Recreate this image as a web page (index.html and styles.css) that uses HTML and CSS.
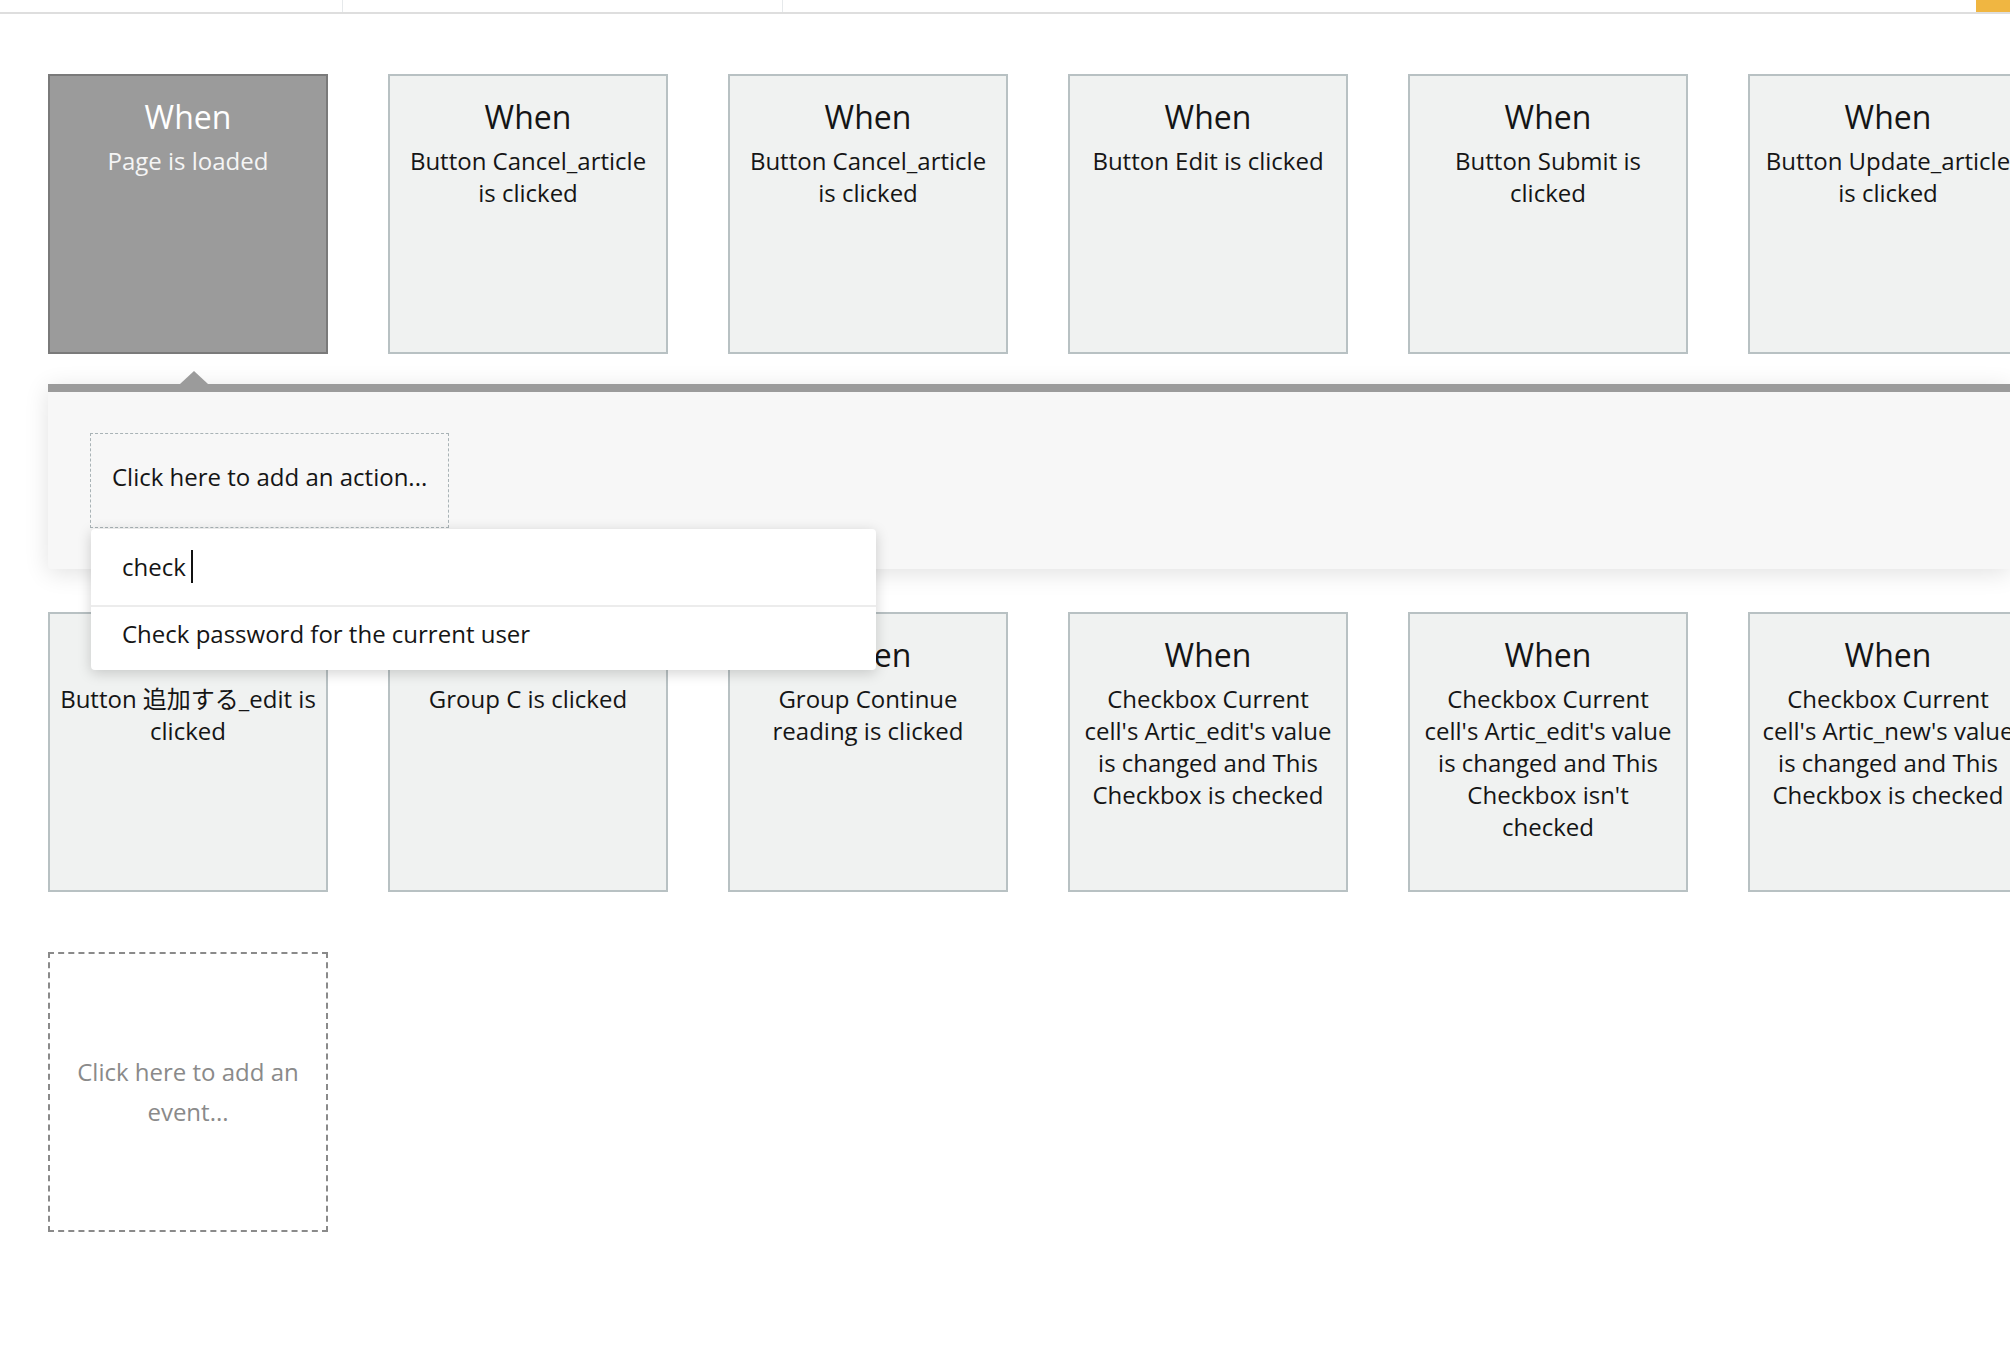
FILE: index.html
```html
<!DOCTYPE html>
<html lang="en">
<head>
<meta charset="utf-8">
<title>Workflow</title>
<link rel="stylesheet" href="styles.css">
</head>
<body>
<header class="topbar">
  <div class="tb-section tb-first"></div>
  <div class="tb-section tb-second"></div>
  <div class="tb-section tb-fill"></div>
  <div class="tb-accent"></div>
</header>
<main class="canvas">
  <div class="row">
    <div class="card card-active"><div class="card-title">When</div><div class="card-sub">Page is loaded</div></div>
    <div class="card"><div class="card-title">When</div><div class="card-sub">Button Cancel_article is clicked</div></div>
    <div class="card"><div class="card-title">When</div><div class="card-sub">Button Cancel_article is clicked</div></div>
    <div class="card"><div class="card-title">When</div><div class="card-sub">Button Edit is clicked</div></div>
    <div class="card"><div class="card-title">When</div><div class="card-sub">Button Submit is clicked</div></div>
    <div class="card"><div class="card-title">When</div><div class="card-sub">Button Update_article is clicked</div></div>
  </div>

  <section class="panel">
    <div class="action-box">
      <span class="action-label">Click here to add an action...</span>
      <div class="dropdown">
        <div class="dd-input"><span>check</span><span class="caret"></span></div>
        <div class="dd-item">Check password for the current user</div>
      </div>
    </div>
  </section>

  <div class="row">
    <div class="card"><div class="card-title">When</div><div class="card-sub">Button 追加する_edit is clicked</div></div>
    <div class="card"><div class="card-title">When</div><div class="card-sub">Group C is clicked</div></div>
    <div class="card"><div class="card-title">When</div><div class="card-sub">Group Continue reading is clicked</div></div>
    <div class="card"><div class="card-title">When</div><div class="card-sub">Checkbox Current cell's Artic_edit's value is changed and This Checkbox is checked</div></div>
    <div class="card"><div class="card-title">When</div><div class="card-sub">Checkbox Current cell's Artic_edit's value is changed and This Checkbox isn't checked</div></div>
    <div class="card"><div class="card-title">When</div><div class="card-sub">Checkbox Current cell's Artic_new's value is changed and This Checkbox is checked</div></div>
  </div>

  <div class="row row-last">
    <div class="add-event">Click here to add an event...</div>
  </div>
</main>
</body>
</html>
```

FILE: styles.css
```css
html, body {
  margin: 0;
  padding: 0;
}
body {
  width: 2010px;
  height: 1372px;
  overflow: hidden;
  background: #ffffff;
  font-family: "Open Sans", "Noto Sans CJK JP", sans-serif;
  color: #151515;
}

.topbar {
  display: flex;
  height: 12px;
  border-bottom: 2px solid #dedede;
}
.tb-section {
  height: 12px;
}
.tb-first {
  width: 342px;
  border-right: 1px solid #e6e9eb;
}
.tb-second {
  width: 439px;
  border-right: 1px solid #e6e9eb;
}
.tb-fill {
  flex: 1;
}
.tb-accent {
  width: 34px;
  background: #f0b641;
}

.canvas {
  padding: 60px 0 0 48px;
}

.row {
  display: flex;
  gap: 60px;
}
.row-last {
  margin-top: 60px;
}

.card {
  flex: none;
  box-sizing: border-box;
  width: 280px;
  height: 280px;
  padding: 19px 10px 0;
  background: #f0f2f1;
  border: 2px solid #b8c1c3;
  text-align: center;
}
.card-title {
  font-size: 32px;
  line-height: 44px;
}
.card-sub {
  margin-top: 6px;
  font-size: 24px;
  line-height: 32px;
}
.card-active {
  background: #9b9b9b;
  border-color: #7a7a7a;
  color: #ffffff;
}
.card-active .card-sub {
  color: #f5f5f5;
}

.panel {
  position: relative;
  margin-top: 30px;
  margin-bottom: 43px;
  padding: 41px 42px;
  background: #f7f7f7;
  border-top: 8px solid #9b9b9b;
  border-radius: 0 0 0 4px;
  box-shadow: 0 4px 24px rgba(0, 0, 0, 0.12);
}
.panel::before {
  content: "";
  position: absolute;
  top: -21px;
  left: 132px;
  border-left: 14px solid transparent;
  border-right: 14px solid transparent;
  border-bottom: 13px solid #9b9b9b;
}

.action-box {
  position: relative;
  box-sizing: border-box;
  width: 359px;
  height: 95px;
  padding-left: 21px;
  padding-bottom: 9px;
  display: flex;
  align-items: center;
  border: 1px dashed #a9b3b6;
  font-size: 24px;
  color: #151515;
}

.dropdown {
  position: absolute;
  z-index: 5;
  top: 95px;
  left: 0;
  width: 785px;
  background: #ffffff;
  border-radius: 4px;
  box-shadow: 0 3px 14px rgba(0, 0, 0, 0.18);
  font-size: 24px;
  color: #151515;
}
.dd-input {
  box-sizing: border-box;
  height: 78px;
  padding-left: 31px;
  padding-bottom: 2px;
  display: flex;
  align-items: center;
  border-bottom: 2px solid #ececec;
}
.caret {
  display: inline-block;
  width: 2px;
  height: 33px;
  margin-left: 5px;
  background: #111111;
}
.dd-item {
  box-sizing: border-box;
  height: 63px;
  padding-left: 31px;
  padding-bottom: 10px;
  display: flex;
  align-items: center;
}

.add-event {
  flex: none;
  box-sizing: border-box;
  width: 280px;
  height: 280px;
  padding: 0 20px;
  display: flex;
  align-items: center;
  justify-content: center;
  text-align: center;
  border: 2px dashed #8a8a8a;
  font-size: 24px;
  line-height: 40px;
  color: #8a8a8a;
}
```
